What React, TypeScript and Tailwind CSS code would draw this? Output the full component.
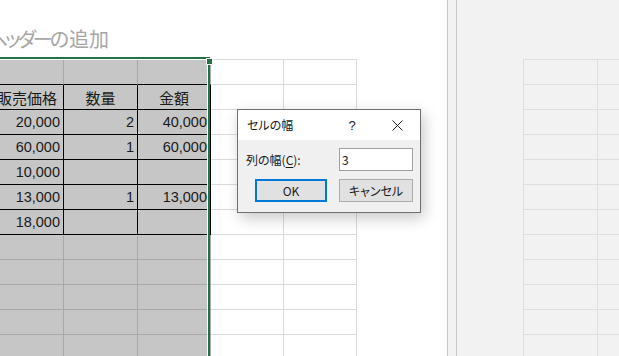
import React from 'react';

const rows: string[][] = [
  ['', '', ''],
  ['販売価格', '数量', '金額'],
  ['20,000', '2', '40,000'],
  ['60,000', '1', '60,000'],
  ['10,000', '', ''],
  ['13,000', '1', '13,000'],
  ['18,000', '', ''],
  ['', '', ''],
  ['', '', ''],
  ['', '', ''],
  ['', '', ''],
  ['', '', ''],
];

const colW = ['w-[73px]', 'w-[74px]', 'w-[73px]'];

function SelCell({ text, r, c }: { text: string; r: number; c: number }) {
  const inTable = r >= 1 && r <= 6;
  const rightCls = inTable ? 'border-r-black' : 'border-r-[#a9a9a9]';
  const bottomCls = r <= 6 ? 'border-b-black' : 'border-b-[#a9a9a9]';
  const isHeader = r === 1;
  return (
    <div
      className={`${colW[c]} h-full shrink-0 border-r border-b ${rightCls} ${bottomCls} bg-[#c6c6c6] flex items-center ${
        isHeader ? 'justify-center' : 'justify-end pr-[3px]'
      } overflow-hidden whitespace-nowrap`}
    >
      {text &&
        (isHeader ? (
          <span className="font-['Noto_Sans_CJK_JP',sans-serif] text-[15px] leading-none text-[#1a1a1a]">{text}</span>
        ) : (
          <span className="font-['Liberation_Sans',sans-serif] text-[14.5px] leading-none text-[#1a1a1a] pt-[1px]">{text}</span>
        ))}
    </div>
  );
}

export default function App() {
  return (
    <div className="w-[619px] h-[356px] flex overflow-hidden bg-white relative">
      {/* Left sheet pane */}
      <div className="relative w-[448px] h-full shrink-0 border-r border-[#c8c8c8] bg-white overflow-hidden">
        <div className="h-[59px] pt-[29px]">
          <div className="flex justify-end w-[109px] whitespace-nowrap">
            <span className="font-['Noto_Sans_CJK_JP',sans-serif] text-[20px] leading-[20px] text-[#a6a6a6] [font-feature-settings:'palt']">
              <span className="tracking-[-3px]">ヘッダー</span>の追加
            </span>
          </div>
        </div>
        <div className="flex flex-col -ml-[9px] w-[366px] border-t border-[#dadada]">
          {rows.map((row, r) => (
            <div key={r} className="flex h-[25px]">
              {row.map((t, c) => (
                <SelCell key={c} text={t} r={r} c={c} />
              ))}
              <div className="w-[73px] h-full shrink-0 border-r border-b border-[#dadada] bg-white" />
              <div className="w-[73px] h-full shrink-0 border-r border-b border-[#dadada] bg-white" />
            </div>
          ))}
        </div>
        {/* selection border */}
        <div className="absolute left-[-5px] top-[57px] w-[215px] h-[320px] border-2 border-[#217346] shadow-[inset_0_0_0_1px_#ffffff] pointer-events-none" />
        <div className="absolute left-[206px] top-[58px] w-[7px] h-[7px] bg-[#217346] border border-white" />
      </div>

      {/* gap between panes */}
      <div className="w-[8px] h-full shrink-0 bg-[#f2f2f2]" />

      {/* Right pane */}
      <div className="flex-1 h-full border-l border-[#c8c8c8] bg-[#f2f2f2] flex flex-col">
        <div className="h-[59px] shrink-0" />
        <div className="flex">
          <div className="w-[66px] shrink-0" />
          <div className="flex-1 flex flex-col border-l border-t border-[#dedede]">
            {rows.map((_, r) => (
              <div key={r} className="flex h-[25px] border-b border-[#dedede]">
                <div className="w-[74px] h-full shrink-0 border-r border-[#dedede]" />
                <div className="flex-1" />
              </div>
            ))}
          </div>
        </div>
      </div>

      {/* Dialog */}
      <div className="absolute left-[237px] top-[109px] w-[184px] h-[104px] border border-[#6f6f6f] flex flex-col shadow-[3px_5px_14px_rgba(0,0,0,0.22)] font-['Noto_Sans_CJK_JP',sans-serif] text-[#1a1a1a]">
        <div className="h-[30px] shrink-0 bg-white flex items-center pl-[9px] pr-[13px]">
          <span className="text-[12px] leading-none [font-feature-settings:'palt']">セルの幅</span>
          <div className="ml-auto flex items-center">
            <span className="w-[12px] text-center text-[13px] leading-none font-['Liberation_Sans',sans-serif]">?</span>
            <span className="ml-[29px] w-[20px] flex justify-center">
              <svg width="11" height="11" viewBox="0 0 11 11">
                <path d="M0.5 0.5 L10.5 10.5 M10.5 0.5 L0.5 10.5" stroke="#1a1a1a" strokeWidth="1" fill="none" />
              </svg>
            </span>
          </div>
        </div>
        <div className="flex-1 bg-[#f0f0f0] flex flex-col pt-[8px]">
          <div className="flex items-center pl-[8px] pr-[7px]">
            <span className="text-[12px] leading-none [font-feature-settings:'palt']">
              列の幅(<span className="underline underline-offset-2">C</span>):
            </span>
            <div className="ml-auto w-[74px] h-[23px] border border-[#a0a0a0] bg-white flex items-center pl-[2px]">
              <span className="text-[12px] leading-none">3</span>
            </div>
          </div>
          <div className="flex mt-[8px] pl-[17px]">
            <div className="w-[72px] h-[23px] border-2 border-[#0078d7] bg-[#e1e1e1] flex items-center justify-center">
              <span className="text-[12px] leading-none">OK</span>
            </div>
            <div className="ml-[12px] w-[74px] h-[23px] border border-[#adadad] bg-[#e1e1e1] flex items-center justify-center">
              <span className="text-[12px] leading-none [font-feature-settings:'palt']">キャンセル</span>
            </div>
          </div>
        </div>
      </div>
    </div>
  );
}
